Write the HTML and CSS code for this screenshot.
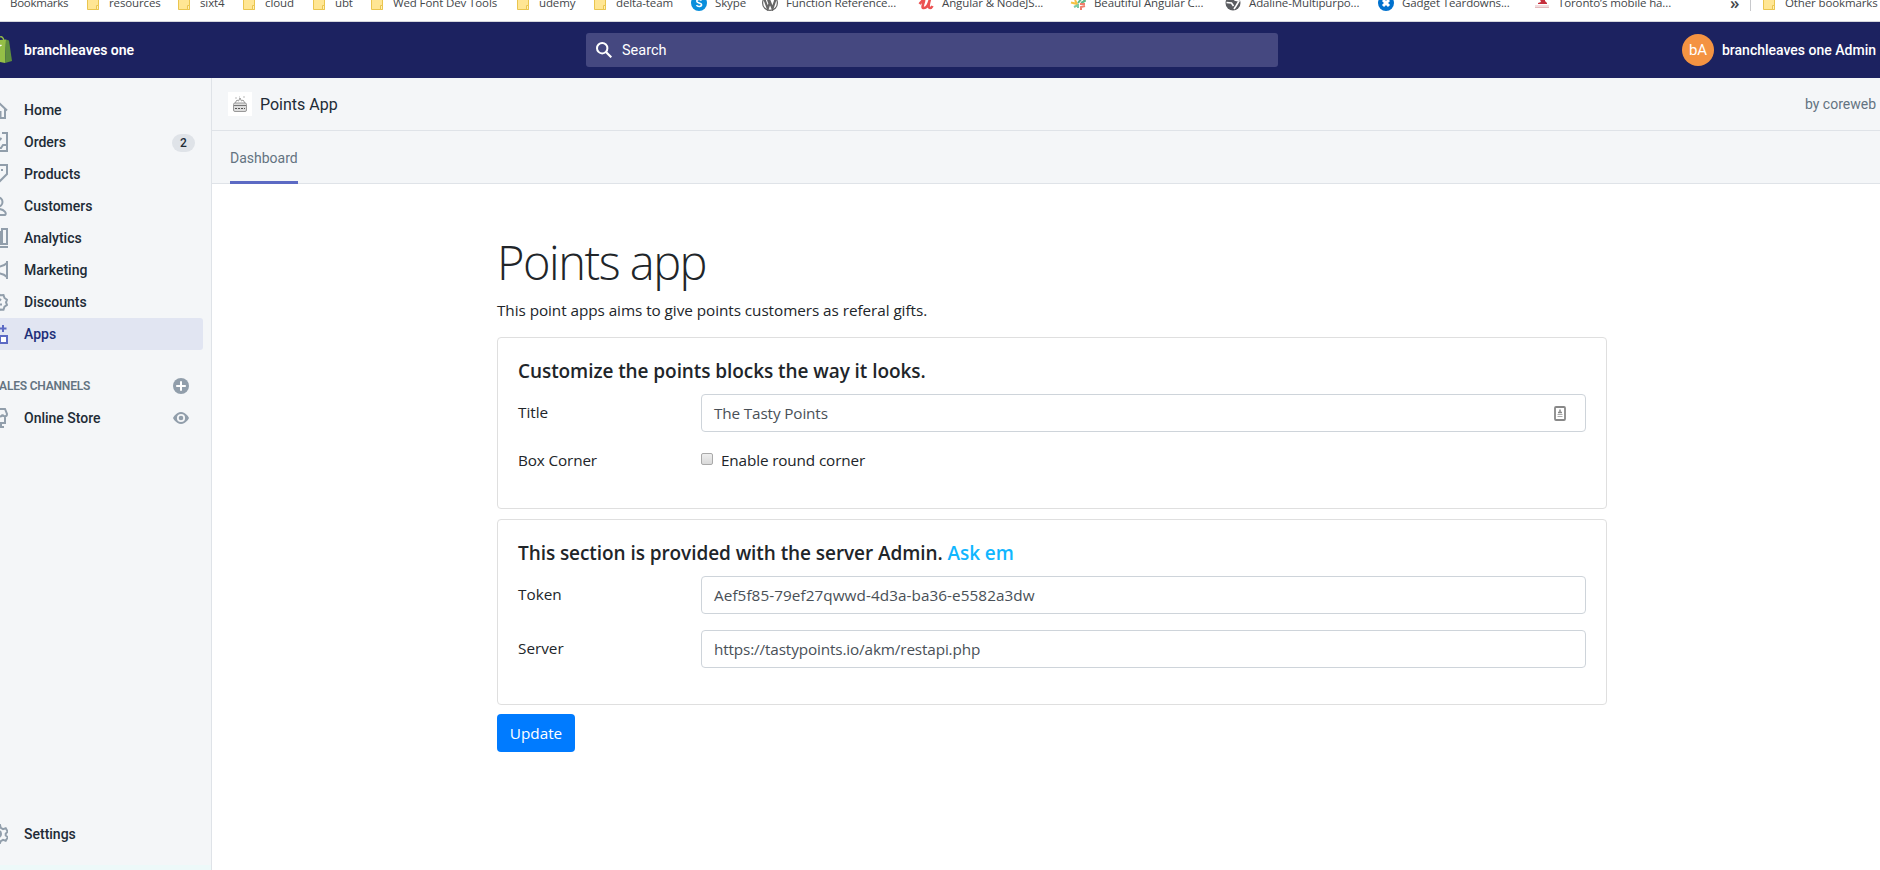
FILE: index.html
```html
<!DOCTYPE html>
<html lang="en">
<head>
<meta charset="utf-8">
<title>Points App</title>
<link rel="stylesheet" href="styles.css">
</head>
<body>
<svg class="defs" aria-hidden="true">
  <symbol id="folder" viewBox="0 0 12 16"><path d="M.5 .5h11v15h-11z" fill="#ffe694" stroke="#eac54f"/><path d="M9.5 15.500v-4h2v4z" fill="#fff0b5" stroke="#eac54f"/></symbol>
</svg>
<nav class="bookmarks">
  <span class="bm first">Bookmarks</span>
  <span class="bm"><svg class="fold"><use href="#folder"/></svg>resources</span>
  <span class="bm"><svg class="fold"><use href="#folder"/></svg>sixt4</span>
  <span class="bm"><svg class="fold"><use href="#folder"/></svg>cloud</span>
  <span class="bm"><svg class="fold"><use href="#folder"/></svg>ubt</span>
  <span class="bm"><svg class="fold"><use href="#folder"/></svg>Wed Font Dev Tools</span>
  <span class="bm"><svg class="fold"><use href="#folder"/></svg>udemy</span>
  <span class="bm"><svg class="fold"><use href="#folder"/></svg>delta-team</span>
  <span class="bm site"><svg class="fav" viewBox="0 0 16 16"><circle cx="8" cy="8" r="8" fill="#0a8fdc"/><path d="M10.500 5.500C9.500 4 5.800 4.200 5.800 6.200c0 2.200 4.800 1.300 4.800 3.600 0 2-4 2.200-5.100.4" fill="none" stroke="#fff" stroke-width="1.600"/></svg>Skype</span>
  <span class="bm site"><svg class="fav" viewBox="0 0 16 16"><circle cx="8" cy="8" r="7.400" fill="#fff" stroke="#666" stroke-width="1.200"/><path d="M2.500 4.500l3.300 9L8 7l2.500 6.500 3-9M6 4.500l2.200 6" fill="none" stroke="#666" stroke-width="2.200"/></svg>Function Reference...</span>
  <span class="bm site"><svg class="fav" viewBox="0 0 16 16"><path d="M1.500 9C5 5 6.500 3 6 6S3 13 6 13s5-5 6-9c-1 4-2.500 9 0 9 1 0 2-1 2.500-2" fill="none" stroke="#ec5252" stroke-width="2.600"/></svg>Angular &amp; NodeJS...</span>
  <span class="bm site"><svg class="fav" viewBox="0 0 16 16" fill="none" stroke-width="2"><path d="M1 7.500l6 1.500-2-4" stroke="#f6c244"/><path d="M8 8l4-5 3 3-4 2" stroke="#5cb88a"/><path d="M4 12l4-2v3" stroke="#7cc9a4"/><path d="M10 9h5M15 11l-4 1v3" stroke="#ef7f6c"/></svg>Beautiful Angular C...</span>
  <span class="bm site"><svg class="fav" viewBox="0 0 16 16"><circle cx="8" cy="8" r="7.500" fill="#5a5c60"/><path d="M1.500 7.500l5 .5 2 3M9 2l1 3 4 1-3 5-2 3" fill="none" stroke="#fff" stroke-width="1.600"/></svg>Adaline-Multipurpo...</span>
  <span class="bm site"><svg class="fav" viewBox="0 0 16 16"><circle cx="8" cy="8" r="8" fill="#0071ce"/><path d="M5 5l6 6M11 5l-6 6" stroke="#fff" stroke-width="3"/></svg>Gadget Teardowns...</span>
  <span class="bm site"><svg class="fav" viewBox="0 0 16 16"><path d="M5 2h6v4l2 2v1H4V8l3-1z" fill="#c62f3c"/><path d="M1 11h14M1 12.500h14" stroke="#e3b9bc"/></svg>Toronto’s mobile ha...</span>
  <span class="bm more">»</span>
  <span class="bm other"><svg class="fold"><use href="#folder"/></svg>Other bookmarks</span>
</nav>

<header class="topbar">
  <div class="store">
    <svg class="bag" viewBox="0 0 12 28"><path d="M0 4L6 3.500 5 27 0 26z" fill="#95bf47"/><path d="M6 3.500l3 1L12 25l-7 2z" fill="#5e8e3e"/><path d="M0 1c2-1 3.500 1 4 4" fill="none" stroke="#95bf47" stroke-width="1.300"/><path d="M0 10l1.500-1" stroke="#fff" stroke-width="1.500"/></svg>
    <strong>branchleaves one</strong>
  </div>
  <div class="search"><svg viewBox="0 0 16 16"><circle cx="6.200" cy="6.200" r="5.200" fill="none" stroke="#fff" stroke-width="2"/><path d="M10 10l5.300 5.300" stroke="#fff" stroke-width="2.200"/></svg>Search</div>
  <div class="user"><span class="avatar">bA</span><strong>branchleaves one Admin</strong></div>
</header>

<div class="shell">
  <aside class="sidebar">
    <ul class="menu">
      <li><svg class="ico" viewBox="0 0 20 20"><path d="M1 10.500L10 2l9 8.500M3.500 9v9h4.500v-6h4.500v6h4.500V9"/></svg>Home</li>
      <li><svg class="ico" viewBox="0 0 20 20"><path d="M6 1H1v18h18V1h-5M1 13h4l2 3h6l2-3h4M10 1v8M6.500 6L10 9.500 13.500 6"/></svg>Orders<span class="badge">2</span></li>
      <li><svg class="ico" viewBox="0 0 20 20"><path d="M10 1h9v9L10 19 1 10z"/><path class="solid" d="M13 5h2v2h-2z"/></svg>Products</li>
      <li><svg class="ico" viewBox="0 0 20 20"><circle cx="10" cy="6" r="4.500"/><path d="M3 19c-2-1 0-6 7-6s9 5 7 6z"/></svg>Customers</li>
      <li><svg class="ico" viewBox="0 0 20 20"><path d="M1 8h5v8H1zM7 4h5v12H7zM14 1h5v15h-5zM0 19h20"/></svg>Analytics</li>
      <li><svg class="ico" viewBox="0 0 20 20"><path d="M19 1v18M19 3C15 7 10 7 2 7v6c8 0 13 0 17 4"/></svg>Marketing</li>
      <li><svg class="ico" viewBox="0 0 20 20"><path d="M10 1.500l2.500 1.800 3-.3 1 3 2.500 1.800-1 2.500 1 2.700-2.500 1.700-1 3-3-.2L10 19l-2.500-1.500-3 .2-1-3L1 13l1-2.700-1-2.500L3.500 6l1-3 3 .3z"/><path d="M13 7l-6 6.500M12 12.500h2M7 8h2"/></svg>Discounts</li>
      <li class="active"><svg class="ico" viewBox="0 0 20 20"><path d="M1 1h7v7H1zM1 12h7v7H1zM15 1v7M11.500 4.500h7"/><path fill="#fff" d="M12 12h7v7h-7z"/></svg>Apps</li>
    </ul>
    <div class="section"><span>SALES CHANNELS</span><svg viewBox="0 0 16 16"><circle cx="8" cy="8" r="8" fill="#919eab"/><path d="M8 3.200v9.600M3.200 8h9.600" stroke="#fff" stroke-width="2"/></svg></div>
    <ul class="menu">
      <li><svg class="ico" viewBox="0 0 20 20"><path d="M3 1h14l2 5c0 3-4 3-4.500.5C14 9 10.500 9 10 6.500 9.500 9 6 9 5.500 6.500 5 9 1 9 1 6zM3 9v6h14V9M13 15v4M9 19h7"/></svg>Online Store<svg class="eye" viewBox="0 0 16 12"><path fill="#919eab" d="M8 0C3 0 0 6 0 6s3 6 8 6 8-6 8-6-3-6-8-6z"/><circle cx="8" cy="6" r="3.200" fill="#919eab" stroke="#f4f6f8" stroke-width="1.800"/></svg></li>
    </ul>
    <ul class="menu foot"><li><svg class="ico" viewBox="0 0 20 20"><path d="M8 1h4l.7 2.800 2.300 1.300 2.700-.9 2 3.400-2 2v1.800l2 2-2 3.400-2.700-.9-2.300 1.300L12 19H8l-.7-2.800L5 15l-2.700.8-2-3.400 2-2V8.600l-2-2 2-3.400L5 5l2.300-1.200z"/><circle cx="10" cy="10" r="3"/></svg>Settings</li></ul>
    <div class="status"></div>
  </aside>

  <main class="main">
    <div class="apphead">
      <svg class="applogo" viewBox="0 0 24 24"><path fill="#fff" d="M0 0h24v24H0z"/><g fill="none" stroke="#999"><rect x="5.500" y="11" width="13" height="8.500" rx="1.500" fill="#ddd"/><path d="M6 13.500h12" stroke="#777"/><path d="M7 16.500h10" stroke="#555" stroke-dasharray="2 1"/><path d="M7 11l2-3 1.500 1L12 6l1.500 3L15 8l2 3"/><path d="M7 6h2M15 5h2M11 5h1" stroke="#bbb"/></g></svg>
      <span class="appname">Points App</span><span class="by">by coreweb</span>
    </div>
    <div class="tabs"><span class="tab">Dashboard</span></div>
    <div class="content">
      <h1>Points app</h1>
      <p class="lead">This point apps aims to give points customers as referal gifts.</p>
      <section class="card one">
        <h2>Customize the points blocks the way it looks.</h2>
        <div class="row"><label>Title</label><div class="input"><span class="tight">The Tasty Points</span><svg class="fill" viewBox="0 0 12 15"><rect x="1" y="1" width="10" height="13" rx="1" fill="#fff" stroke="#888" stroke-width="1.800"/><path d="M6 3.500v3M4 6.500h4" stroke="#888" stroke-width="1.500"/><path d="M3.500 8.500h5M3.500 10.500h5" stroke="#aaa"/></svg></div></div>
        <div class="row check"><label class="tight">Box Corner</label><div class="opt"><span class="box"></span><span class="tight">Enable round corner</span></div></div>
      </section>
      <section class="card two">
        <h2>This section is provided with the server Admin. <a>Ask em</a></h2>
        <div class="row"><label>Token</label><div class="input"><span class="token">Aef5f85-79ef27qwwd-4d3a-ba36-e5582a3dw</span></div></div>
        <div class="row"><label>Server</label><div class="input"><span class="tight">https://tastypoints.io/akm/restapi.php</span></div></div>
      </section>
      <button class="update" type="button">Update</button>
    </div>
  </main>
</div>
</body>
</html>
```
FILE: styles.css
```css
* { box-sizing: border-box; }
body {
  margin: 0;
  width: 1880px;
  height: 870px;
  overflow: hidden;
  display: flex;
  flex-direction: column;
  background: #fff;
  font-family: Roboto, sans-serif;
  font-size: 14px;
  color: #212b36;
}
svg { display: block; flex: none; }
.defs { position: absolute; width: 0; height: 0; }

/* browser bookmark strip, scrolled partly out of view */
.bookmarks {
  height: 22px;
  flex: none;
  border-bottom: 1px solid #d5d6dc;
  display: grid;
  grid-template-columns: 77px 91px 65px 70px 58px 146px 77px 97px 71px 156px 152px 155px 153px 156px 196px 20px 1fr;
  padding-left: 10px;
  overflow: hidden;
  font: 11.500px/16px "Open Sans", sans-serif;
  color: #44474a;
}
.bm { display: flex; gap: 10px; height: 16px; margin-top: -5px; white-space: nowrap; letter-spacing: -.12px; }
.first { letter-spacing: -.25px; }
.fold { width: 12px; height: 16px; margin-top: -1px; }
.fav { width: 16px; height: 16px; }
.site { gap: 8px; }
.more { font-size: 17px; font-weight: 600; }
.other { border-left: 1px solid #c8c9cc; padding-left: 12px; }

.topbar {
  height: 56px;
  flex: none;
  background: #1c2260;
  color: #fff;
  display: grid;
  grid-template-columns: 586px 692px 1fr;
  align-items: center;
}
.topbar strong { font-weight: 500; }
.store { display: flex; align-items: center; gap: 12px; }
.topbar .store strong { font-weight: 600; }
.bag { width: 12px; height: 28px; }
.search {
  height: 34px;
  border-radius: 3px;
  background: #454880;
  display: flex;
  align-items: center;
  gap: 10px;
  padding-left: 10px;
  font-size: 14.500px;
}
.search svg { width: 16px; height: 16px; }
.user { display: flex; align-items: center; justify-content: flex-end; gap: 8px; padding-right: 4px; }
.avatar {
  width: 32px;
  height: 32px;
  border-radius: 50%;
  background: #f49342;
  text-align: center;
  line-height: 32px;
  font-size: 15px;
}

.shell { flex: 1; display: flex; min-height: 0; }
.sidebar {
  width: 212px;
  flex: none;
  background: #f4f6f8;
  border-right: 1px solid #dfe3e8;
  display: flex;
  flex-direction: column;
  padding-top: 16px;
}
.menu { list-style: none; margin: 0; padding: 0; font-weight: 500; }
.menu li {
  height: 32px;
  width: 203px;
  display: flex;
  align-items: center;
  gap: 16px;
  border-radius: 0 3px 3px 0;
}
.ico { width: 20px; height: 20px; margin-left: -12px; fill: none; stroke: #919eab; stroke-width: 2; }
.ico .solid { fill: #919eab; stroke: none; }
.active { background: #e1e5f2; color: #202e78; }
.active .ico { stroke: #5c6ac4; }
.badge {
  margin: 2px 8px 0 auto;
  width: 23px;
  height: 18px;
  border-radius: 9px;
  background: #dfe3e8;
  text-align: center;
  font: 500 12px/19px Roboto, sans-serif;
}
.section {
  height: 32px;
  margin: 20px 22px 0 -8px;
  display: flex;
  align-items: center;
  justify-content: space-between;
  font-size: 12px;
  font-weight: 600;
  letter-spacing: -.2px;
  color: #637381;
}
.section svg { width: 16px; height: 16px; }
.eye { width: 16px; height: 12px; margin: 0 14px 0 auto; }
.foot { margin-top: auto; }
.status { height: 5px; margin-top: 15px; background: #edf9f9; }

.main { flex: 1; background: #fff; }
.apphead {
  height: 53px;
  background: #f4f6f8;
  border-bottom: 1px solid #dfe3e8;
  display: flex;
  align-items: center;
  padding: 0 4px 0 16px;
}
.applogo { width: 24px; height: 24px; margin-right: 8px; }
.appname { font-size: 16px; }
.by { margin-left: auto; color: #637381; }
.tabs {
  height: 53px;
  background: #f4f6f8;
  border-bottom: 1px solid #dfe3e8;
  padding-left: 18px;
  display: flex;
}
.tab { height: 53px; line-height: 55px; color: #637381; border-bottom: 3px solid #5c6ac4; }

.content {
  width: 1110px;
  margin: 50px 0 0 285px;
  font: 15.300px/24px "Open Sans", sans-serif;
  color: #212529;
}
h1 { margin: 0; font-size: 47px; font-weight: 300; line-height: 56px; letter-spacing: -1.500px; }
.lead { margin: 8px 0 15px; letter-spacing: -.06px; }
.tight { letter-spacing: -.14px; }
.token { letter-spacing: .06px; }
.card { border: 1px solid #dfdfdf; border-radius: 4px; padding: 21px 20px 0; }
.one { height: 172px; margin-bottom: 10px; }
.two { height: 186px; margin-bottom: 9px; }
h2 { margin: 0 0 11px; font-size: 19px; font-weight: 600; line-height: 24px; letter-spacing: -.07px; }
h2 a { color: #10b6ff; }
.row { display: grid; grid-template-columns: 183px 885px; margin-bottom: 16px; line-height: 36px; }
.check { line-height: 24px; }
.input {
  height: 38px;
  border: 1px solid #ced4da;
  border-radius: 4px;
  padding: 0 19px 0 12px;
  color: #495057;
  display: flex;
  align-items: center;
  justify-content: space-between;
}
.fill { width: 12px; height: 15px; }
.opt { display: flex; align-items: center; gap: 8px; }
.box { width: 12px; height: 12px; margin-top: -2px; border: 1px solid #a9a9a9; border-radius: 2px; background: linear-gradient(#eee, #d9d9d9); }
.update {
  display: block;
  width: 78px;
  height: 38px;
  padding: 0;
  border: 0;
  border-radius: 4px;
  background: #007bff;
  color: #fff;
  font: 15.300px/38px "Open Sans", sans-serif;
}
```
